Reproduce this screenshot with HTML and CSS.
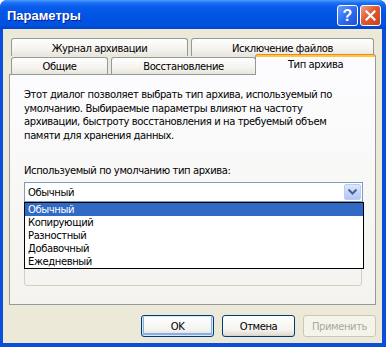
FILE: index.html
```html
<!DOCTYPE html>
<html>
<head>
<meta charset="utf-8">
<link rel="stylesheet" href="styles.css">
</head>
<body>
<div class="window">
  <div class="titlebar">
    <span class="title">Параметры</span>
    <div class="tbtns">
      <span class="tb help">?</span>
      <span class="tb close"><svg width="11" height="11" viewBox="0 0 11 11"><path d="M1.5 1.5 L9.5 9.5 M9.5 1.5 L1.5 9.5" stroke="#fff" stroke-width="2.2" stroke-linecap="square"/></svg></span>
    </div>
  </div>
  <div class="frame">
    <div class="tabs">
      <div class="tabrow back">
        <div class="tab t-journal">Журнал архивации</div>
        <div class="tab t-excl">Исключение файлов</div>
      </div>
      <div class="tabrow front">
        <div class="tab t-general">Общие</div>
        <div class="tab t-restore">Восстановление</div>
        <div class="tab t-type sel">Тип архива</div>
      </div>
    </div>
    <div class="panel">
      <p class="desc">Этот диалог позволяет выбрать тип архива, используемый по<br>умолчанию. Выбираемые параметры влияют на частоту<br>архивации, быстроту восстановления и на требуемый объем<br>памяти для хранения данных.</p>
      <div class="label">Используемый по умолчанию тип архива:</div>
      <div class="combo-wrap">
        <div class="combo">
          <span class="combo-text">Обычный</span>
          <span class="arrow"><svg width="9" height="6" viewBox="0 0 9 6"><path d="M0.5 0.5 L4.5 4.5 L8.5 0.5" fill="none" stroke="#4D6185" stroke-width="2"/></svg></span>
        </div>
        <ul class="list">
          <li class="on">Обычный</li>
          <li>Копирующий</li>
          <li>Разностный</li>
          <li>Добавочный</li>
          <li>Ежедневный</li>
        </ul>
      </div>
      <div class="group"></div>
    </div>
    <div class="buttons">
      <button class="btn default">OK</button>
      <button class="btn">Отмена</button>
      <button class="btn disabled">Применить</button>
    </div>
  </div>
</div>
</body>
</html>
```

FILE: styles.css
```css
html, body {
  margin: 0;
  padding: 0;
  background: #ffffff;
}
body {
  font-family: "DejaVu Sans", "Liberation Sans", sans-serif;
  font-size: 10px;
  letter-spacing: -0.4px;
  color: #000;
}
.window {
  width: 386px;
  height: 347px;
  box-sizing: border-box;
  display: flex;
  flex-direction: column;
  background: #0A4FDB;
  border-radius: 7px 7px 0 0;
  overflow: hidden;
}
.titlebar {
  height: 29px;
  flex: none;
  display: flex;
  align-items: center;
  justify-content: space-between;
  padding: 0 5px 0 7px;
  background: linear-gradient(#4A9CFF 0, #1C6EF5 3px, #0A5CEB 7px, #0055E4 50%, #0052E0 85%, #0046CC 100%);
}
.title {
  color: #fff;
  font-family: "Liberation Sans", sans-serif;
  font-weight: bold;
  font-size: 13px;
  letter-spacing: 0;
  text-shadow: 1px 1px 0 #0A1E8C;
  margin-top: 1px;
}
.tbtns {
  display: flex;
  gap: 2px;
  margin-top: 2px;
}
.tb {
  width: 21px;
  height: 21px;
  box-sizing: border-box;
  border: 1px solid #fff;
  border-radius: 3px;
  display: flex;
  align-items: center;
  justify-content: center;
  letter-spacing: 0;
}
.help {
  background: linear-gradient(135deg, #6B9BFF 0%, #2F6CF0 50%, #1C4FD8 100%);
  color: #fff;
  font-family: "Liberation Sans", sans-serif;
  font-weight: bold;
  font-size: 16px;
}
.close {
  background: linear-gradient(135deg, #F0A08A 0%, #E05A30 45%, #C8401C 100%);
}
.frame {
  flex: 1;
  margin: 0 4px 4px 3px;
  background: #ECE9D8;
  padding: 9px 6px 0 6px;
  display: flex;
  flex-direction: column;
}
.tabs {
  display: flex;
  flex-direction: column;
}
.tabrow {
  display: flex;
  padding-left: 2px;
}
.tabrow.back {
  height: 18px;
  gap: 3px;
}
.tabrow.front {
  height: 17px;
  margin-top: 1px;
  align-items: flex-end;
}
.tab {
  box-sizing: border-box;
  border: 1px solid #919B9C;
  border-bottom: none;
  border-radius: 3px 3px 0 0;
  background: linear-gradient(#FEFEFE, #F4F3EE 60%, #E8E6DC);
  display: flex;
  align-items: center;
  justify-content: center;
  height: 100%;
  padding-top: 1px;
}
.t-journal { width: 177px; }
.t-excl { width: 183px; }
.t-general { width: 97px; }
.t-restore { width: 145px; margin-left: 3px; }
.t-type {
  width: 121px;
  margin-left: -1px;
  height: 21px;
  margin-bottom: -1px;
  position: relative;
  z-index: 2;
  border-top: 1px solid #E68B2C;
  background: linear-gradient(#FFC83C 0, #FFC83C 2px, #FCFCFE 2px);
  align-items: flex-start;
  padding-top: 4px;
}
.panel {
  height: 231px;
  box-sizing: border-box;
  border: 1px solid #919B9C;
  background: linear-gradient(#FCFCFE, #F4F3EE);
  padding: 13px 12px 0 14px;
  display: flex;
  flex-direction: column;
  position: relative;
  z-index: 1;
}
.desc {
  margin: 0;
  line-height: 13.5px;
}
.label {
  margin-top: 22px;
  line-height: 13px;
}
.combo-wrap {
  margin-top: 5px;
  position: relative;
  z-index: 3;
}
.combo {
  height: 20px;
  box-sizing: border-box;
  border: 1px solid #7F9DB9;
  background: #fff;
  display: flex;
  align-items: center;
  justify-content: space-between;
  padding: 0 1px 0 3px;
}
.combo-text {
  line-height: 13px;
}
.arrow {
  width: 17px;
  height: 16px;
  box-sizing: border-box;
  border: 1px solid #B9CCF8;
  border-radius: 2px;
  background: linear-gradient(#DCE6FD, #C1D3FB 60%, #B1C6F5);
  display: flex;
  align-items: center;
  justify-content: center;
}
.list {
  position: absolute;
  top: 100%;
  left: 0;
  right: -1px;
  margin: 0;
  padding: 0;
  list-style: none;
  border: 1px solid #000;
  background: #fff;
}
.list li {
  height: 13px;
  line-height: 13px;
  padding-left: 3px;
}
.list li.on {
  background: #316AC5;
  color: #fff;
}
.group {
  margin-top: 6px;
  height: 76px;
  border: 1px solid #D0D0BF;
  border-radius: 3px;
  margin-right: 1px;
}
.buttons {
  display: flex;
  justify-content: flex-end;
  gap: 8px;
  margin-top: 10px;
}
.btn {
  width: 73px;
  height: 22px;
  box-sizing: border-box;
  border: 1px solid #003C74;
  border-radius: 3px;
  background: linear-gradient(#FFFFFF, #F3F3EF 70%, #E2DFD4 92%, #D6D0C5);
  font-family: "DejaVu Sans", "Liberation Sans", sans-serif;
  font-size: 10px;
  letter-spacing: -0.4px;
  color: #000;
  padding: 0;
}
.btn.default {
  box-shadow: inset 0 0 0 1px #CEE7FF, inset 0 -1px 0 2px #89ADE4;
}
.btn.disabled {
  border-color: #C9C7BA;
  background: #F5F4EA;
  color: #ACA899;
}
```
